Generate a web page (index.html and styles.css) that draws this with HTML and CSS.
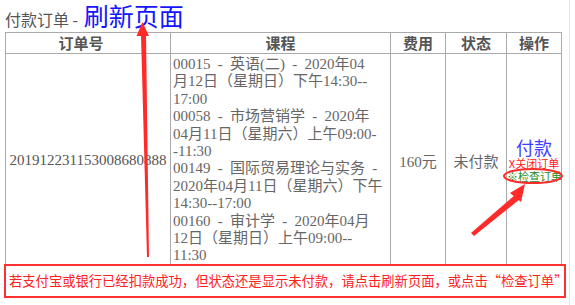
FILE: index.html
```html
<!DOCTYPE html>
<html lang="zh-CN">
<head>
<meta charset="utf-8">
<title>付款订单</title>
<link rel="stylesheet" href="styles.css">
</head>
<body>
<div class="page">
  <div class="title">付款订单 - <a class="refresh">刷新页面</a></div>
  <table class="orders">
    <colgroup>
      <col class="c-no"><col class="c-course"><col class="c-fee"><col class="c-state"><col class="c-op">
    </colgroup>
    <thead>
      <tr><th class="th-no">订单号</th><th>课程</th><th>费用</th><th>状态</th><th>操作</th></tr>
    </thead>
    <tbody>
      <tr>
        <td class="no">201912231153008680888</td>
        <td class="course">
          <div>00015 - 英语(二) - 2020年04<br>月12日（星期日）下午14:30--<br>17:00</div>
          <div>00058 - 市场营销学 - 2020年<br>04月11日（星期六）上午09:00-<br>-11:30</div>
          <div>00149 - 国际贸易理论与实务 -<br>2020年04月11日（星期六）下午<br>14:30--17:00</div>
          <div>00160 - 审计学 - 2020年04月<br>12日（星期日）上午09:00--<br>11:30</div>
        </td>
        <td class="center">160元</td>
        <td class="center">未付款</td>
        <td class="center op">
          <a class="pay">付款</a>
          <a class="close">X关闭订单</a>
          <a class="check">※检查订单</a>
        </td>
      </tr>
    </tbody>
  </table>
  <div class="notice">若支付宝或银行已经扣款成功，但状态还是显示未付款，请点击刷新页面，或点击“检查订单”</div>
</div>
<svg class="marks" width="575" height="305" viewBox="0 0 575 305">
  <polygon points="141,35 146,35 149,257 147,257" fill="#ff2a2a"/>
  <polygon points="142.5,22 136.5,36 149,36" fill="#ff2a2a"/>
  <ellipse cx="533" cy="176" rx="29" ry="7" fill="none" stroke="#ff2a2a" stroke-width="2"/>
  <polygon points="515,195 520,199 474,236 471,233" fill="#ff2a2a"/>
  <polygon points="525,184 510,193 521,202" fill="#ff2a2a"/>
</svg>
</body>
</html>
```
FILE: styles.css
```css
html, body {
  margin: 0;
  padding: 0;
  background: #fff;
}
body {
  position: relative;
  width: 575px;
  height: 305px;
  overflow: hidden;
  font-family: "Liberation Serif", "Noto Sans CJK SC", serif;
  color: #666;
}
.page {
  width: 570px;
  height: 305px;
  box-sizing: border-box;
  border-right: 1px solid #e4e4e4;
  padding-left: 5px;
}
.title {
  height: 32px;
  line-height: 31px;
  font-size: 16px;
  color: #555;
  font-family: "Noto Sans CJK SC", sans-serif;
  white-space: nowrap;
}
.refresh {
  font-size: 25px;
  color: #1414ff;
  margin-left: 2px;
}
.orders {
  width: 556px;
  table-layout: fixed;
  border-collapse: collapse;
  border: 1px solid #aaa;
}
.c-no { width: 165px; }
.c-course { width: 220px; }
.c-fee { width: 55px; }
.c-state { width: 61px; }
.c-op { width: 55px; }
.orders th, .orders td {
  border: 1px solid #aaa;
  padding: 0;
}
.orders th {
  height: 20px;
  line-height: 20px;
  font-size: 15px;
  font-weight: bold;
  color: #555;
  font-family: "Noto Sans CJK SC", sans-serif;
}
.orders th.th-no {
  padding-right: 14px;
}
.orders td {
  font-size: 15px;
  vertical-align: middle;
}
.no {
  text-align: center;
  color: #555;
  white-space: nowrap;
}
.course {
  padding: 2px 2px !important;
  line-height: 17.4px;
  white-space: nowrap;
  word-spacing: 3.5px;
  color: #666;
}
.center {
  text-align: center;
}
.op a {
  display: block;
  font-family: "Noto Sans CJK SC", sans-serif;
  white-space: nowrap;
}
.pay {
  font-size: 18px;
  line-height: 20px;
  color: #4040ff;
}
.close {
  font-size: 11px;
  line-height: 13px;
  color: #ff2020;
}
.check {
  font-size: 11px;
  line-height: 13px;
  color: #1a8a1a;
}
.notice {
  position: relative;
  margin-top: -4px;
  margin-left: -1px;
  width: 562px;
  height: 34px;
  box-sizing: border-box;
  border: 2px solid #ff3030;
  background: #fff;
  padding-left: 3px;
  line-height: 30px;
  font-size: 13.3px;
  color: #ff2020;
  font-family: "Noto Sans CJK SC", sans-serif;
  white-space: nowrap;
}
.marks {
  position: absolute;
  left: 0;
  top: 0;
  pointer-events: none;
}
```
